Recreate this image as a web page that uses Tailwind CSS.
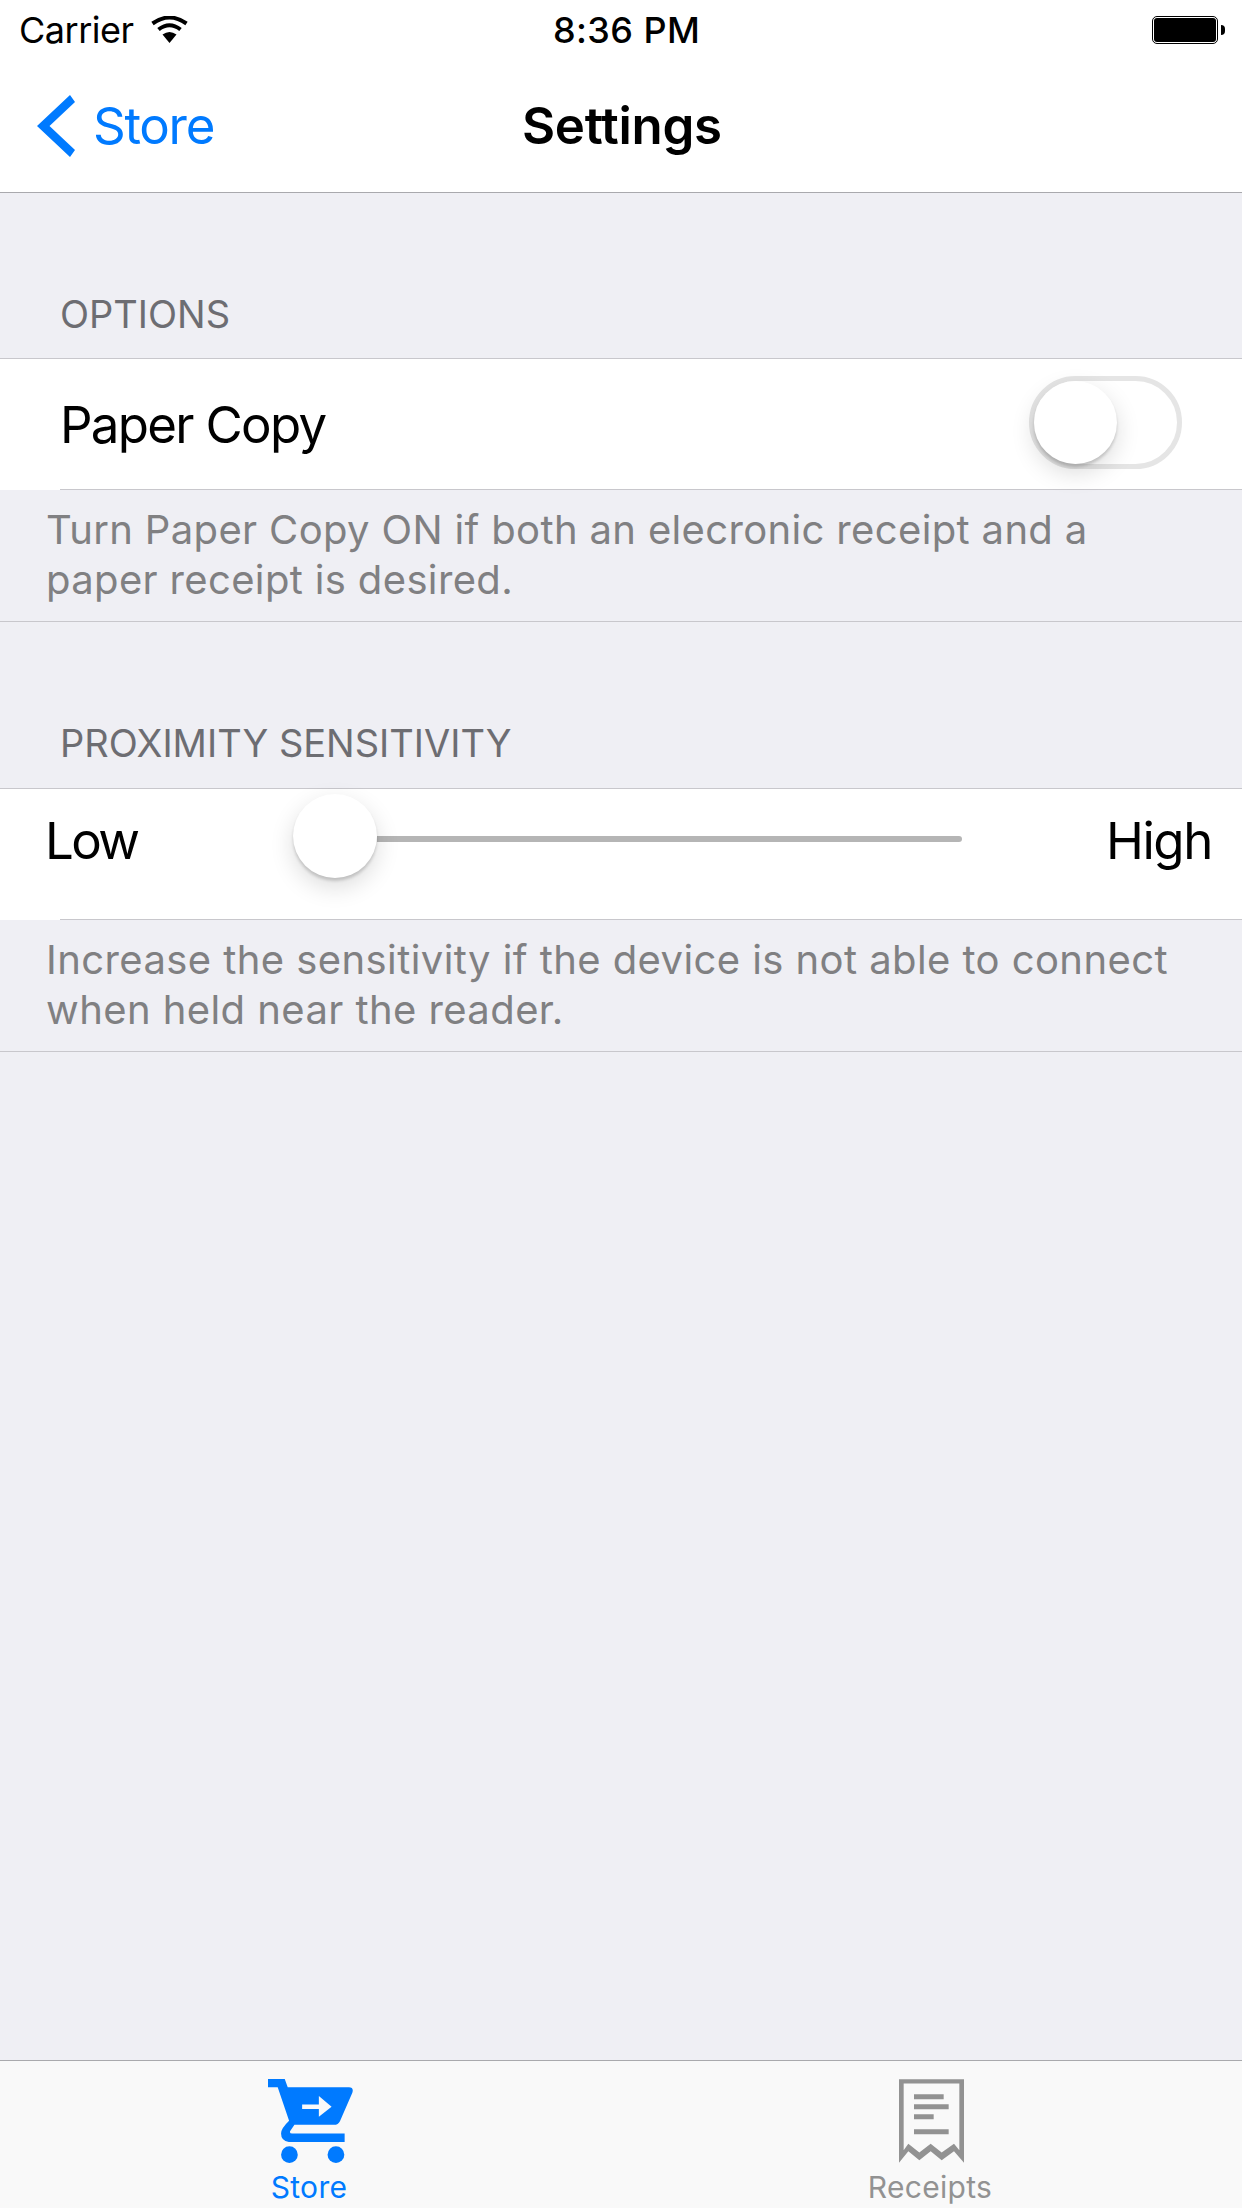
<!doctype html>
<html>
<head>
<meta charset="utf-8">
<script src="https://cdn.jsdelivr.net/npm/@tailwindcss/browser@4"></script>
</head>
<body class="m-0">
<div class="w-[1242px] h-[2208px] flex flex-col bg-[#efeff4] font-['Inter','Liberation_Sans',sans-serif] overflow-hidden">
  <header class="h-[193px] shrink-0 bg-white border-b border-[#a9a9ad] flex flex-col">
    <div class="h-[60px] flex items-center relative">
      <div class="flex items-center pl-[19px] gap-[17px]">
        <span class="text-[36px] leading-[60px] text-black tracking-[-0.5px]">Carrier</span>
        <svg width="37" height="27" viewBox="0 0 37 27" class="mt-[-2px]"><path d="M18.5 27 L11.5 18.5 Q18.5 13.5 25.5 18.5 Z" fill="#000"/><path d="M7.5 13.5 Q18.5 5 29.5 13.5" fill="none" stroke="#000" stroke-width="4"/><path d="M1.5 7.5 Q18.5 -4.5 35.5 7.5" fill="none" stroke="#000" stroke-width="4"/></svg>
      </div>
      <span class="absolute left-[553px] text-[36px] leading-[60px] font-medium text-black tracking-[0.4px]">8:36 PM</span>
      <div class="absolute left-[1152px] top-[16px] flex items-center gap-[3px]">
        <div class="w-[66px] h-[28px] rounded-[5px] border border-black p-[1px]"><div class="w-full h-full rounded-[3px] bg-black"></div></div>
        <div class="w-[4px] h-[10px] rounded-r-[4px] bg-black"></div>
      </div>
    </div>
    <div class="flex-1 flex items-center relative">
      <div class="flex items-center pl-[37px] gap-[18px]">
        <svg width="38" height="62" viewBox="0 0 38 62"><path d="M33 0 L38 7 L12.5 31 L38 55 L33 62 L0 31 Z" fill="#007aff"/></svg>
        <span class="text-[#007aff] text-[51px] leading-[60px] tracking-[-1.3px]">Store</span>
      </div>
      <span class="absolute left-[522px] text-[51px] leading-[60px] font-semibold text-black tracking-[-0.3px]">Settings</span>
    </div>
  </header>

  <main class="flex-1 flex flex-col">
    <div class="h-[165px] flex items-end pl-[60px] pb-[22px] text-[38px] leading-[44px] text-[#6d6d72]">OPTIONS</div>
    <div class="h-[132px] bg-white border-t border-[#c8c7cc] flex flex-col">
      <div class="flex-1 ml-[60px] pr-[60px] border-b border-[#c8c7cc] flex items-center justify-between">
        <span class="text-[51px] leading-[60px] text-black tracking-[-1.7px] mt-[2px]">Paper Copy</span>
        <div class="relative w-[153px] h-[93px] mt-[-3px] rounded-full border-[5px] border-[#e5e5e5] bg-white">
          <div class="absolute left-0 top-0 w-[83px] h-[83px] rounded-full bg-white shadow-[0_9px_24px_rgba(0,0,0,0.14),0_3px_3px_rgba(0,0,0,0.16)]"></div>
        </div>
      </div>
    </div>
    <div class="h-[132px] border-b border-[#c8c7cc] pl-[46px] pt-[15px] text-[40px] leading-[50px] tracking-[0.35px] text-[#808082]">Turn Paper Copy ON if both an elecronic receipt and a<br>paper receipt is desired.</div>

    <div class="h-[166px] flex items-end pl-[60px] pb-[23px] text-[38px] leading-[44px] text-[#6d6d72]">PROXIMITY SENSITIVITY</div>
    <div class="h-[132px] bg-white border-t border-[#c8c7cc] flex flex-col">
      <div class="flex-1 ml-[60px] pr-[30px] border-b border-[#c8c7cc] flex items-center">
        <span class="ml-[-15px] text-[51px] leading-[60px] text-black w-[248px] mt-[-27px] tracking-[-2.6px] shrink-0">Low</span>
        <div class="relative w-[84px] h-[84px] mt-[-36px] rounded-full bg-white shadow-[0_9px_24px_rgba(0,0,0,0.14),0_3px_3px_rgba(0,0,0,0.16)] z-10 shrink-0"></div>
        <div class="w-[585px] h-[6px] bg-[#b5b5b5] rounded-r-full mt-[-30px] shrink-0"></div>
        <span class="ml-auto text-[51px] leading-[60px] text-black mt-[-27px] tracking-[-1.4px]">High</span>
      </div>
    </div>
    <div class="h-[132px] border-b border-[#c8c7cc] pl-[46px] pt-[15px] text-[40px] leading-[50px] tracking-[0.42px] text-[#808082]">Increase the sensitivity if the device is not able to connect<br>when held near the reader.</div>
  </main>

  <nav class="h-[148px] shrink-0 bg-[#f9f9f9] border-t border-[#a9a9ad] flex">
    <div class="w-[620px] flex flex-col items-center pt-[18px]">
      <svg width="85" height="84" viewBox="113 87 254 251"><path d="M113 87 H163 L172 112 H355 Q370 112 365 128 L328 213 Q323 224 310 224 H192 L179 243 Q177 250 185 250 H342 V275 H175 Q152 272 152 250 Q152 235 176 212 L142 112 H113 Z" fill="#007aff"/><path d="M215 163 H265 V138 L303 170 L265 200 V177 H215 Z" fill="#f9f9f9"/><circle cx="177" cy="313" r="25" fill="#007aff"/><circle cx="316" cy="313" r="25" fill="#007aff"/></svg>
      <span class="text-[30px] leading-[36px] text-[#007aff] mt-[6px] tracking-[0.3px] ml-[-2px]">Store</span>
    </div>
    <div class="w-[622px] flex flex-col items-center pt-[18px]">
      <svg width="65" height="84" viewBox="177 87 195 251"><path fill-rule="evenodd" d="M177 87 H372 V338 L342 303 L305 330 L272 303 L238 330 L205 303 L177 338 Z M191 100 V300 L205 281 L238 307 L272 281 L305 307 L342 281 L358 300 V100 Z" fill="#929292"/><path d="M222 132 H311 V147 H222 Z M222 162 H326 V177 H222 Z M222 192 H281 V207 H222 Z M222 237 H326 V252 H222 Z" fill="#929292"/></svg>
      <span class="text-[30px] leading-[36px] text-[#929292] mt-[6px] tracking-[0.3px] ml-[-2px]">Receipts</span>
    </div>
  </nav>
</div>
</body>
</html>
